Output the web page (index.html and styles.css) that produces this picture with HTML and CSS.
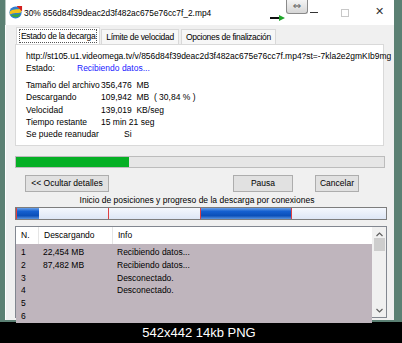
FILE: index.html
```html
<!DOCTYPE html>
<html>
<head>
<meta charset="utf-8">
<link rel="stylesheet" href="styles.css">
</head>
<body>
<div class="shot">
  <div class="win">
    <div class="titlebar">
      <svg class="appicon" width="15" height="15" viewBox="0 0 16 16">
        <circle cx="8" cy="8" r="6.5" fill="#2f7fd0"/>
        <path d="M2 7 C5 4 9 5 14 4 L14 8 C10 9 6 8 2 10 Z" fill="#f3c21a"/>
        <path d="M3 11 C6 9 10 11 13 9 L12 12 C9 14 6 13 3 11 Z" fill="#3aa83a"/>
        <path d="M9 1 L15 1 L15 7 Z" fill="#d32020"/>
      </svg>
      <span class="title">30% 856d84f39deac2d3f482ac675e76cc7f_2.mp4</span>
      <svg class="arrow" width="16" height="6" viewBox="0 0 16 6">
        <rect x="0" y="2" width="10" height="2" fill="#111"/>
        <path d="M9 0 L15 3 L9 6 Z" fill="#1fa52a"/>
      </svg>
      <div class="dragbtn">&#8660;</div>
      <div class="ctrl min"></div>
      <div class="ctrl max"></div>
      <div class="ctrl close">&#10005;</div>
    </div>
    <div class="body">
      <div class="tabs">
        <div class="tab sel"><span class="focus">Estado de la decarga</span></div>
        <div class="tab">Límite de velocidad</div>
        <div class="tab">Opciones de finalización</div>
      </div>
      <div class="panel">
        <div class="url">http://st105.u1.videomega.tv/v/856d84f39deac2d3f482ac675e76cc7f.mp4?st=-7kla2e2gmKIb9mg</div>
        <div class="row state"><span class="lbl">Estado:</span><span class="blue">Recibiendo datos...</span></div>
        <div class="info">
          <div class="row"><span class="k">Tamaño del archivo</span><span>356,476&nbsp; MB</span></div>
          <div class="row"><span class="k">Descargando</span><span>109,942&nbsp; MB&nbsp; ( 30,84 % )</span></div>
          <div class="row"><span class="k">Velocidad</span><span>139,019&nbsp; KB/seg</span></div>
          <div class="row"><span class="k">Tiempo restante</span><span>15 min 21 seg</span></div>
          <div class="row"><span class="k">Se puede reanudar</span><span class="si">Si</span></div>
        </div>
      </div>
      <div class="progress"><div class="fill"></div></div>
      <div class="buttons">
        <div class="btn b1">&lt;&lt; Ocultar detalles</div>
        <div class="btn b2">Pausa</div>
        <div class="btn b3">Cancelar</div>
      </div>
      <div class="caption">Inicio de posiciones y progreso de la descarga por conexiones</div>
      <div class="segbar">
        <div class="mark"></div>
        <div class="seg s1"></div>
        <div class="gap g1"></div>
        <div class="mark"></div>
        <div class="gap g2"></div>
        <div class="mark"></div>
        <div class="seg s2"></div>
        <div class="mark"></div>
        <div class="gap g3"></div>
      </div>
      <div class="list">
        <div class="cols">
          <div class="hdr">
            <span class="c1">N.</span><span class="c2">Descargando</span><span class="c3">Info</span>
          </div>
          <div class="rows">
            <div class="lr"><span class="c1">1</span><span class="c2">22,454 MB</span><span class="c3">Recibiendo datos...</span></div>
            <div class="lr"><span class="c1">2</span><span class="c2">87,482 MB</span><span class="c3">Recibiendo datos...</span></div>
            <div class="lr"><span class="c1">3</span><span class="c2"></span><span class="c3">Desconectado.</span></div>
            <div class="lr"><span class="c1">4</span><span class="c2"></span><span class="c3">Desconectado.</span></div>
            <div class="lr"><span class="c1">5</span><span class="c2"></span><span class="c3"></span></div>
            <div class="lr"><span class="c1">6</span><span class="c2"></span><span class="c3"></span></div>
          </div>
        </div>
        <div class="scroll">
          <svg width="7" height="5" viewBox="0 0 7 5"><path d="M0.5 4 L3.5 1 L6.5 4" fill="none" stroke="#606060" stroke-width="1.2"/></svg>
          <div class="thumb"></div>
          <div class="track"></div>
          <svg width="7" height="5" viewBox="0 0 7 5"><path d="M0.5 1 L3.5 4 L6.5 1" fill="none" stroke="#606060" stroke-width="1.2"/></svg>
        </div>
      </div>
    </div>
  </div>
  <div class="footer">542x442 14kb PNG</div>
</div>
</body>
</html>
```
FILE: styles.css
```css
* { box-sizing: border-box; }
html, body { margin: 0; padding: 0; }
body { width: 402px; height: 343px; background: #000; overflow: hidden; font-family: "Liberation Sans", Arial, sans-serif; }
.shot { display: flex; flex-direction: column; height: 343px; }
.win {
  height: 322px;
  background: #5b8073;
  padding: 0 8px 2px 5px;
  display: flex; flex-direction: column;
}
.titlebar {
  position: relative;
  height: 25px; background: #fff;
  display: flex; align-items: center;
  padding-left: 2px;
  border-left: 1px solid #b8c8c2;
}
.appicon { margin-right: 1px; flex: none; }
.title { font-family: "Liberation Sans", sans-serif; font-size: 8.4px; color: #000; white-space: nowrap; }
.arrow { position: absolute; left: 264px; top: 15px; }
.dragbtn {
  position: absolute; left: 280px; top: 0; width: 22px; height: 14px;
  background: linear-gradient(#f4f4f4, #d6d6d6);
  border: 1px solid #8a8a8a; border-top: none; border-radius: 0 0 3px 3px;
  font-family: "DejaVu Sans", sans-serif;
  font-size: 10px; line-height: 12px; text-align: center; color: #555;
}
.ctrl { position: absolute; }
.min { left: 304px; top: 12px; width: 8px; height: 1px; background: #333; }
.max { left: 335px; top: 9px; width: 8px; height: 8px; border: 1px solid #c8c8c8; }
.close { left: 369px; top: 6px; font-size: 11px; line-height: 12px; color: #333; font-family: "DejaVu Sans", sans-serif; }
.body {
  flex: 1; background: #f0f0f0;
  border-left: 1px solid #fff;
  padding: 2px 5px 0 9px;
  display: flex; flex-direction: column;
  font-size: 8.5px; color: #000;
}
.tabs { display: flex; align-items: flex-end; height: 17px; padding-left: 1px; }
.tab {
  height: 15px; padding: 0 4px; margin-right: 2px;
  border: 1px solid #d9d9d9; border-bottom: none;
  background: #f7f7f7; line-height: 14px; white-space: nowrap;
  letter-spacing: -0.3px;
}
.tab.sel { height: 17px; background: #fff; padding: 1px 2px 0; margin-right: 1px; }
.focus { border: 1px dotted #555; padding: 0 1px; line-height: 12px; display: inline-block; }
.panel {
  height: 102px; width: 369px; background: #fff;
  border: 1px solid #d9d9d9;
  padding: 5px 0 0 10px;
}
.url { height: 12px; line-height: 12px; white-space: nowrap; letter-spacing: -0.02px; }
.row { display: flex; height: 12.2px; line-height: 12px; white-space: nowrap; }
.state { margin-bottom: 5px; }
.lbl { width: 51px; }
.blue { color: #1a1aff; }
.k { width: 75px; flex: none; }
.si { padding-left: 23px; }
.progress {
  margin-top: 10px; height: 12px; width: 370px;
  background: #e6e6e6; border: 1px solid #bcbcbc;
}
.fill { width: 113px; height: 10px; background: #06b025; }
.buttons { display: flex; margin-top: 7px; height: 18px; }
.btn {
  height: 17px; border: 1px solid #adadad; background: #e1e1e1;
  text-align: center; line-height: 15px; white-space: nowrap;
}
.b1 { width: 84px; margin-left: 10px; }
.b2 { width: 60px; margin-left: 124px; }
.b3 { width: 44px; margin-left: 22px; }
.caption { text-align: center; margin-top: 2px; height: 11px; line-height: 11px; padding-right: 10px; white-space: nowrap; }
.segbar {
  margin-top: 1px; height: 13px; width: 372px;
  border: 1px solid #7d7d7d; display: flex;
  background: #dce5f4;
}
.seg { height: 100%; background: linear-gradient(#6aa0e8 0%, #1560d0 30%, #0b4fb8 70%, #5c95df 100%); }
.s1 { width: 22px; }
.s2 { width: 90px; }
.gap { height: 100%; background: linear-gradient(#f4f7fd, #dde6f5); }
.g1 { width: 69px; }
.g2 { width: 91px; }
.g3 { flex: 1; }
.mark { width: 1px; height: 100%; background: #e04040; }
.list {
  margin-top: 6px; width: 372px; height: 92px;
  border: 1px solid #828790; display: flex;
  background: #fff;
}
.cols { flex: 1; display: flex; flex-direction: column; }
.hdr { height: 17px; display: flex; align-items: center; background: #fff; }
.hdr span { border-right: 1px solid #e5e5e5; height: 17px; line-height: 17px; padding-left: 5px; }
.hdr .c3 { border-right: none; }
.rows { flex: 1; background: #bfb5bd; padding-top: 2px; }
.lr { display: flex; height: 12.8px; line-height: 12.8px; white-space: nowrap; }
.c1 { width: 23px; flex: none; }
.c2 { width: 74px; flex: none; }
.c3 { flex: 1; }
.lr .c1 { padding-left: 5px; }
.lr .c2 { padding-left: 4px; }
.lr .c3 { padding-left: 4px; }
.scroll {
  width: 14px; background: #f0f0f0;
  display: flex; flex-direction: column; align-items: center;
  padding: 5px 0 4px;
}
.thumb { width: 11px; height: 13px; background: #cdcdcd; margin-top: 1px; }
.track { flex: 1; }
.footer {
  flex: 1; color: #fff; text-align: center;
  font-family: "Liberation Sans", Arial, sans-serif; font-size: 13px;
  line-height: 21px; padding-right: 4px;
}
```
